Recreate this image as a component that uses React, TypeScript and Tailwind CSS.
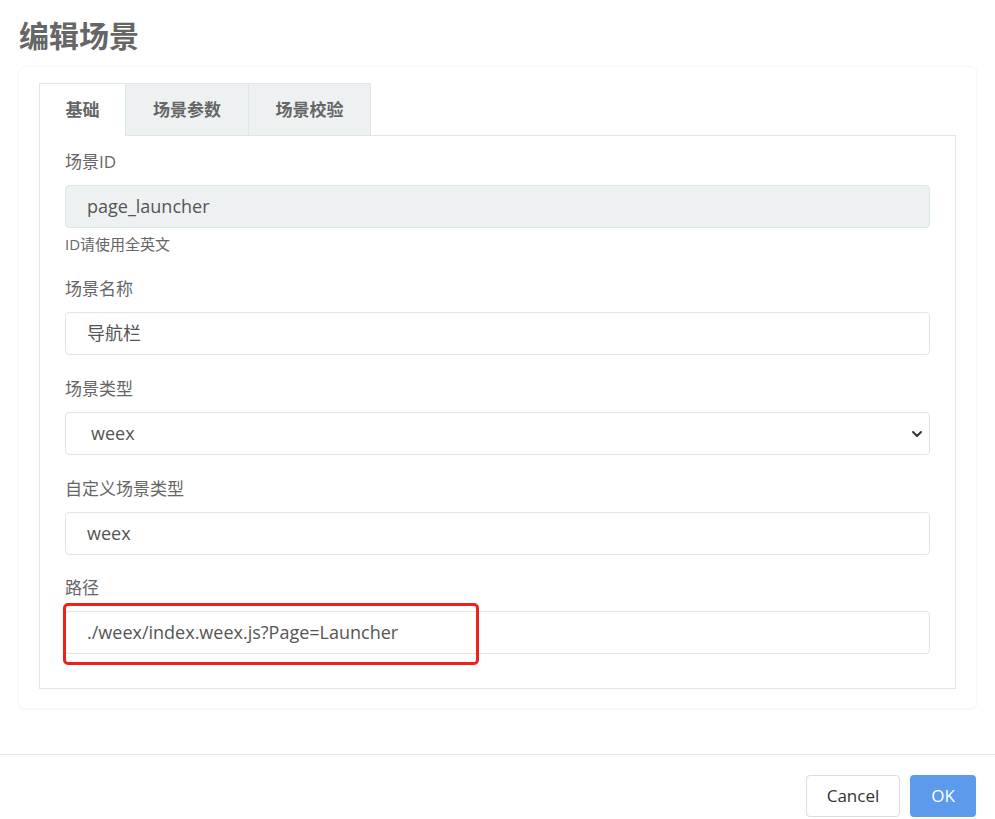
import { ChevronDown } from "lucide-react"

const font = { fontFamily: '"Microsoft YaHei", "Open Sans", "Noto Sans CJK SC", sans-serif' }

function Label({ children }: { children: React.ReactNode }) {
  return <div className="h-6 text-[17px] leading-6 text-[#666] mb-[11px]">{children}</div>
}

function Input({ value, disabled }: { value: string; disabled?: boolean }) {
  return (
    <div
      className={
        "h-[43px] rounded border border-[#dde6e8] pl-[21px] flex items-center text-[18px] text-[#555] " +
        (disabled ? "bg-[#edf1f2]" : "bg-white")
      }
    >
      {value}
    </div>
  )
}

export default function App() {
  return (
    <div className="w-[995px] h-[819px] bg-white relative" style={font}>
      <h2 className="pl-[19px] pt-[14px] h-[66px] text-[30px] font-bold leading-[44px] text-[#666]">编辑场景</h2>

      <div className="mx-[18px] w-[959px] h-[643px] rounded-md border border-[#f6f6f6] shadow-[0_1px_2px_rgba(0,0,0,0.03)] pl-[20px] pt-[16px]">
        <div className="flex h-[53px]">
          <div className="w-[87px] border border-b-0 border-[#dde6e8] bg-white flex items-center justify-center text-[17px] font-bold text-[#666]">
            基础
          </div>
          <div className="w-[123px] border border-l-0 border-[#dde6e8] bg-[#edf1f2] flex items-center justify-center text-[17px] font-bold text-[#666]">
            场景参数
          </div>
          <div className="w-[122px] border border-l-0 border-[#dde6e8] bg-[#edf1f2] flex items-center justify-center text-[17px] font-bold text-[#666]">
            场景校验
          </div>
        </div>

        <div className="w-[917px] h-[554px] border border-t-0 border-[#dde6e8] relative -mt-px">
          <div className="absolute top-0 left-[87px] right-0 border-t border-[#dde6e8]" />
          <div className="px-[25px] pt-[15px]">
            <Label>场景ID</Label>
            <Input value="page_launcher" disabled />
            <div className="mt-[6px] h-5 text-[15px] leading-5 text-[#666]">ID请使用全英文</div>

            <div className="mt-[23px]">
              <Label>场景名称</Label>
              <Input value="导航栏" />
            </div>

            <div className="mt-[22px]">
              <Label>场景类型</Label>
              <div className="h-[43px] rounded border border-[#dde6e8] pl-[25px] pr-[4px] flex items-center justify-between text-[18px] text-[#555]">
                <span>weex</span>
                <ChevronDown size={16} strokeWidth={3} className="text-[#333]" />
              </div>
            </div>

            <div className="mt-[22px]">
              <Label>自定义场景类型</Label>
              <Input value="weex" />
            </div>

            <div className="mt-[21px]">
              <Label>路径</Label>
              <div className="relative">
                <Input value="./weex/index.weex.js?Page=Launcher" />
                <div className="absolute left-[-2px] top-[-8px] w-[416px] h-[62px] rounded-[5px] border-[3px] border-[#f0201a]" />
              </div>
            </div>
          </div>
        </div>
      </div>

      <div className="absolute left-0 right-0 top-[754px] border-t border-[#e5e5e5]" />
      <div className="absolute right-[19px] top-[775px] flex gap-[10px]">
        <button className="w-[94px] h-[42px] rounded border border-[#ddd] bg-white text-[17px] text-[#333]">Cancel</button>
        <button className="w-[66px] h-[42px] rounded bg-[#5c9beb] text-[17px] text-white">OK</button>
      </div>
    </div>
  )
}
